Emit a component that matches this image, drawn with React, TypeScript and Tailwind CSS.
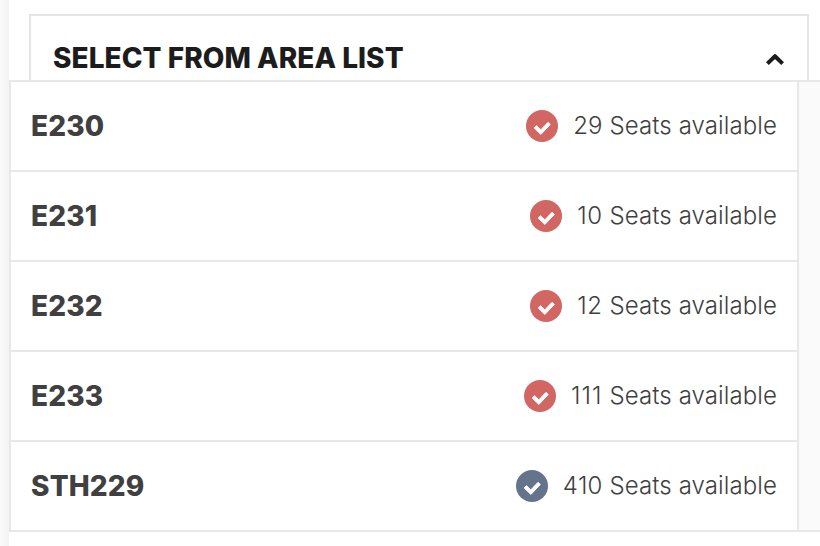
const rows: { name: string; seats: number; color: string; spacing: string }[] = [
  { name: "E230", seats: 29, color: "bg-[#d16662]", spacing: "tracking-[0.1px]" },
  { name: "E231", seats: 10, color: "bg-[#d16662]", spacing: "tracking-[0.6px]" },
  { name: "E232", seats: 12, color: "bg-[#d16662]", spacing: "tracking-[0.6px]" },
  { name: "E233", seats: 111, color: "bg-[#d16662]", spacing: "tracking-[1.1px]" },
  { name: "STH229", seats: 410, color: "bg-[#64748b]", spacing: "tracking-[0.18px]" },
];

function Check() {
  return (
    <svg viewBox="0 0 32 32" className="size-8" fill="white" stroke="white" strokeWidth="1" strokeLinejoin="round">
      <path d="M8.2 18 L10.5 15.7 L14.8 19.9 L22 12.3 L24.3 14.5 L14.9 24.4 Z" />
    </svg>
  );
}

export default function App() {
  return (
    <div className="flex h-[546px] w-[820px] overflow-hidden bg-white font-['Inter',sans-serif]">
      <div className="w-[9px] shrink-0 bg-gradient-to-r from-[#fafafa] to-[#f3f3f3]" />
      <div className="flex grow flex-col">
        <div className="mt-[14px] ml-5 mr-[11px] flex h-[66px] items-start justify-between border-2 border-b-0 border-[#e5e5e5] pt-[22px] pr-[22px] pl-[22px]">
          <h1 className="text-[28px] leading-10 font-extrabold tracking-[0.05px] text-[#1c1c1c]">SELECT FROM AREA LIST</h1>
          <svg viewBox="0 0 20 14" className="mt-[14px] h-[14px] w-5" fill="none" stroke="#1c1c1c" strokeWidth="4" strokeLinejoin="round">
            <path d="M2.4 11.6 L10 4.2 L17.6 11.6" />
          </svg>
        </div>
        <div className="flex border-y-2 border-[#e8e8e8] bg-[#fafafa]">
          <ul className="w-[790px] border-x-2 border-[#e8e8e8] bg-white">
            {rows.map((r) => (
              <li key={r.name} className="flex h-[90px] items-center justify-between border-b-2 border-[#e8e8e8] pr-5 pl-5 last:h-[88px] last:border-b-0">
                <span className="text-[28px] font-extrabold tracking-[0.15px] text-[#404040]">{r.name}</span>
                <span className="flex items-center gap-[15px]">
                  <span className={"size-8 rounded-full " + r.color}><Check /></span>
                  <span className="text-[24px] font-light tracking-[0.1px] text-[#404040]">
                    <span className={"[font-kerning:none] " + r.spacing}>{r.seats}</span> Seats available
                  </span>
                </span>
              </li>
            ))}
          </ul>
        </div>
      </div>
    </div>
  );
}
